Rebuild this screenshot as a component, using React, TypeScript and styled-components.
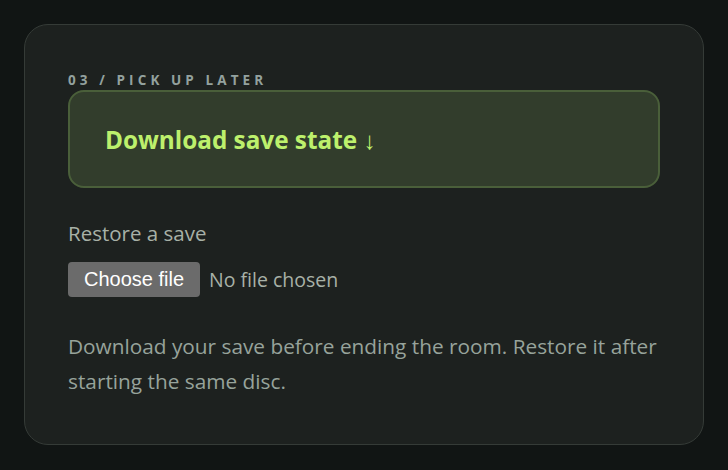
import React from "react";
import styled, { createGlobalStyle } from "styled-components";

const Global = createGlobalStyle`
  html, body { margin: 0; padding: 0; background: #111514; }
  body { font-family: "Open Sans", "Noto Sans", sans-serif; }
`;

const Page = styled.div`
  padding: 24px;
  min-height: 470px;
  box-sizing: border-box;
`;

const Card = styled.section`
  box-sizing: border-box;
  width: 680px;
  background: #1d211f;
  border: 1px solid #353b37;
  border-radius: 24px;
  padding: 46px 43px 45px;
  display: flex;
  flex-direction: column;
`;

const Eyebrow = styled.div`
  font-family: "Open Sans", sans-serif;
  font-weight: 700;
  font-size: 13.5px;
  letter-spacing: 4.1px;
  color: #93a19e;
  line-height: 18px;
`;

const DownloadButton = styled.button`
  margin-top: 1px;
  box-sizing: border-box;
  height: 98px;
  width: 100%;
  background: #323d2c;
  border: 2px solid #4a5f3a;
  border-radius: 16px;
  color: #bdf06c;
  font-family: "Open Sans", sans-serif;
  font-weight: 700;
  font-size: 24.3px;
  text-align: left;
  padding: 0 0 0 35px;
  cursor: pointer;
`;

const FieldLabel = styled.label`
  margin-top: 31px;
  font-size: 20.5px;
  font-weight: 500;
  color: #a8b1a7;
  line-height: 28px;
`;

const FileRow = styled.div`
  margin-top: 15px;
  display: flex;
  align-items: center;
  gap: 9px;
`;

const FileButton = styled.span`
  display: inline-flex;
  align-items: center;
  justify-content: center;
  height: 35px;
  padding: 0 16px;
  background: #6b6b6b;
  border-radius: 4px;
  color: #ffffff;
  font-family: "Liberation Sans", Arial, sans-serif;
  font-size: 20px;
`;

const FileStatus = styled.span`
  font-size: 19.5px;
  color: #a8b1a7;
`;

const Note = styled.p`
  margin: 32px 0 0;
  font-size: 20.8px;
  line-height: 35px;
  color: #97a39b;
`;

export default function App() {
  return (
    <>
      <Global />
      <Page>
        <Card>
          <Eyebrow>03 / PICK UP LATER</Eyebrow>
          <DownloadButton>Download save state ↓</DownloadButton>
          <FieldLabel>Restore a save</FieldLabel>
          <FileRow>
            <FileButton>Choose file</FileButton>
            <FileStatus>No file chosen</FileStatus>
          </FileRow>
          <Note>
            Download your save before ending the room. Restore it after starting the same disc.
          </Note>
        </Card>
      </Page>
    </>
  );
}
